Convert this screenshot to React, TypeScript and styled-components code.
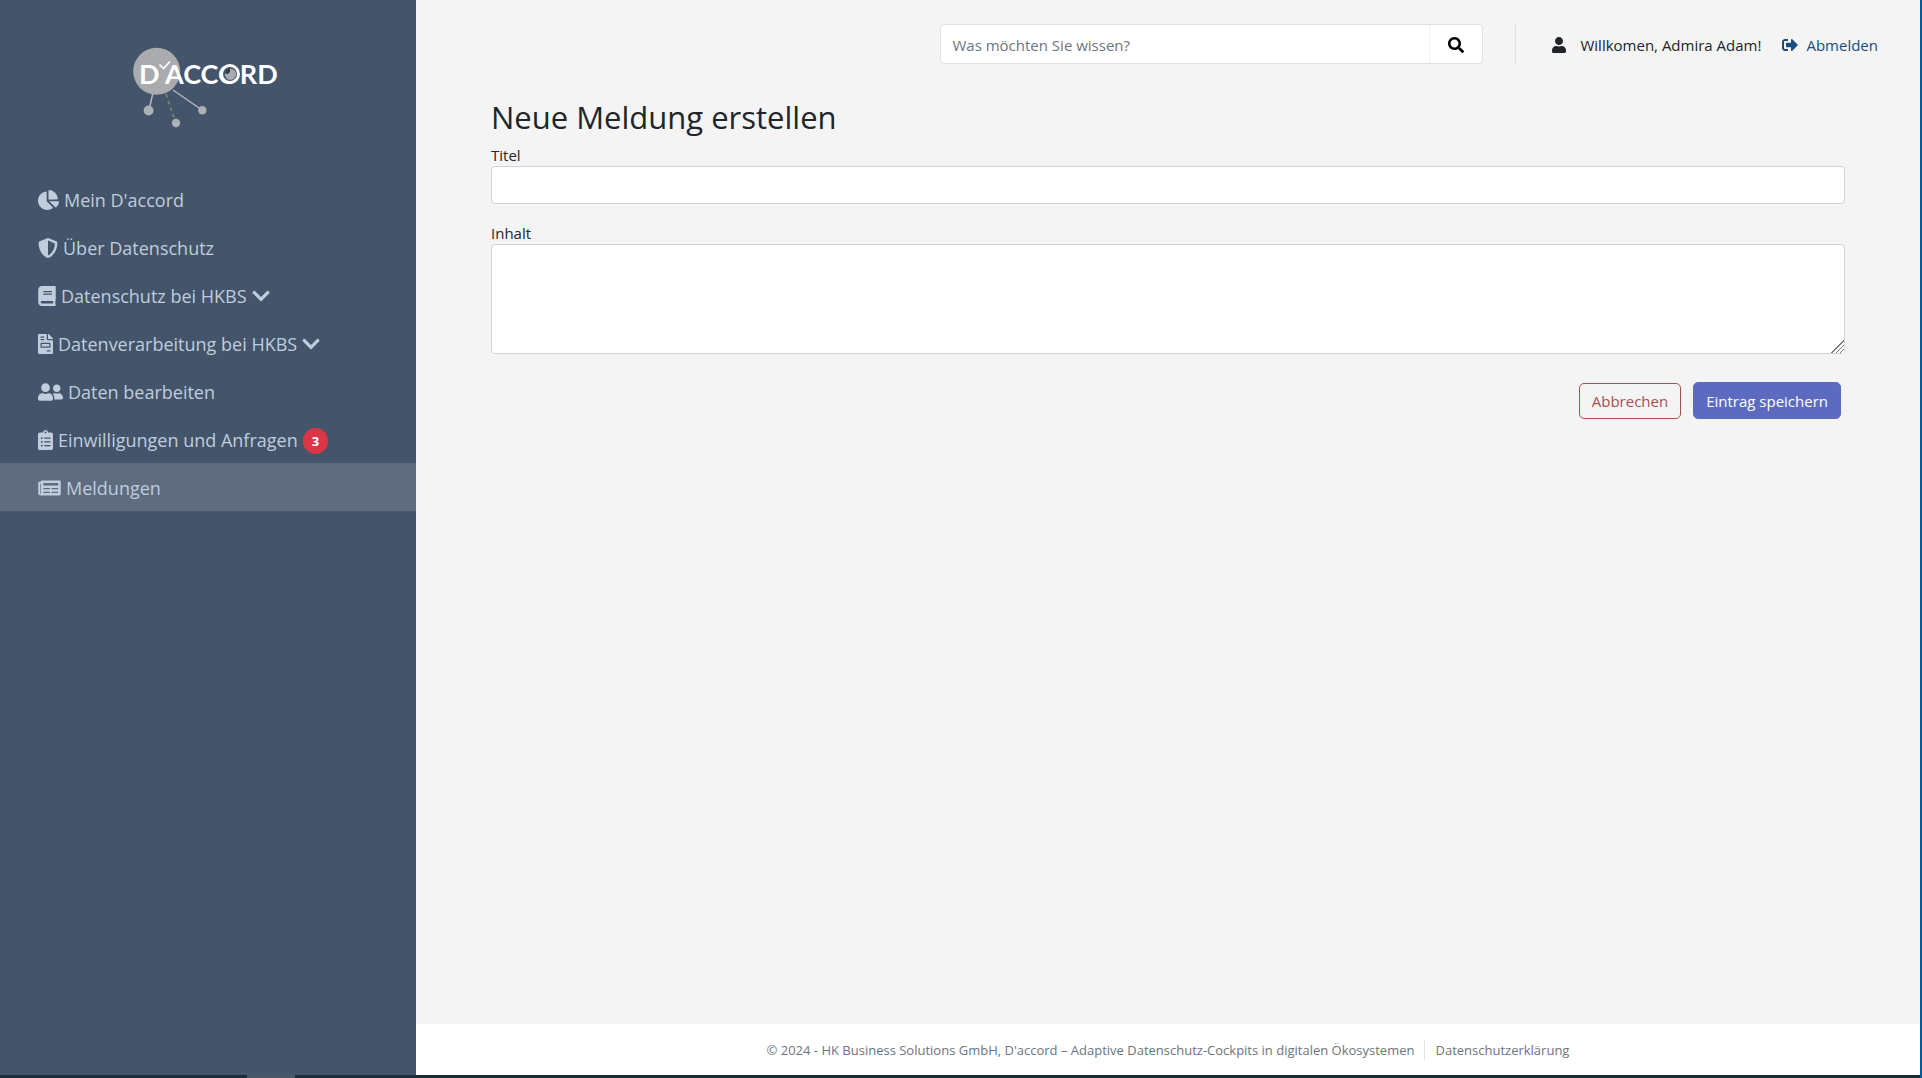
import React from 'react';
import styled, { createGlobalStyle } from 'styled-components';
import {
  FaBook, FaChartPie, FaChevronDown, FaClipboardList, FaFileInvoice, FaNewspaper,
  FaSearch, FaShieldAlt, FaSignOutAlt, FaUser, FaUserFriends,
} from 'react-icons/fa';

const GlobalStyle = createGlobalStyle`
  *, *::before, *::after { box-sizing: border-box; }
  body {
    margin: 0;
    background: #f4f4f4;
    color: #212529;
    font: 15px/24px "Open Sans", "Noto Sans", sans-serif;
  }
  a { color: inherit; text-decoration: none; }
  button, input, textarea { font: inherit; margin: 0; }
`;

const Screen = styled.div`
  display: flex;
  flex-direction: column;
  min-height: 100vh;
  border-right: 2px solid #005a9e;
`;

const Shell = styled.div`
  flex: 1;
  display: flex;
`;

const Sidebar = styled.aside`
  flex: none;
  width: 416px;
  background: #44546a;
  color: #bfcddd;
`;

const Brand = styled.a`
  display: block;
  height: 175px;
  padding: 40px 0 0 125px;
`;

const NavItem = styled.a<{ $active?: boolean }>`
  display: flex;
  align-items: center;
  gap: 5px;
  height: 48px;
  padding: 2px 0 0 38px;
  font-size: 18px;
  white-space: nowrap;
  background: ${(p) => (p.$active ? '#5f6b7e' : 'transparent')};
`;

const NavIcon = styled.span<{ $width: number }>`
  display: flex;
  svg {
    width: ${(p) => p.$width}px;
    height: 20px;
  }
`;

const Badge = styled.span`
  margin-top: 2px;
  padding: 0 9px;
  border-radius: 13px;
  background: #dc3545;
  color: #fff;
  font-size: 13px;
  font-weight: 700;
  line-height: 26px;
`;

const Main = styled.div`
  flex: 1;
  min-width: 0;
  display: flex;
  flex-direction: column;
`;

const TopBar = styled.header`
  display: flex;
  justify-content: flex-end;
  align-items: center;
  padding: 24px 42px 0 75px;
  height: 64px;
`;

const SearchForm = styled.form`
  display: flex;
  width: 543px;
  height: 40px;
  border: 1px solid #dee2e6;
  border-radius: 4px;
  background: #fff;
  overflow: hidden;
`;

const SearchInput = styled.input`
  flex: 1;
  min-width: 0;
  padding: 2px 11px 0;
  border: 0;
  outline: 0;
  background: transparent;
  &::placeholder { color: #6c757d; opacity: 1; }
`;

const SearchButton = styled.button`
  display: grid;
  place-items: center;
  width: 53px;
  padding: 2px 0 0;
  border: 0;
  border-left: 1px solid #f0f1f3;
  background: transparent;
  color: #000;
  font-size: 16px;
`;

const Account = styled.div`
  display: flex;
  align-items: center;
  height: 40px;
  margin-left: 32px;
  padding: 2px 0 0 35px;
  border-left: 1px solid #dee2e6;
  gap: 21px;
`;

const AccountEntry = styled.span<{ $gap: number; $color?: string }>`
  display: flex;
  align-items: center;
  gap: ${(p) => p.$gap}px;
  color: ${(p) => p.$color ?? 'inherit'};
  white-space: nowrap;
  svg { height: 16px; width: 16px; }
`;

const Content = styled.main`
  flex: 1;
  padding: 34px 75px 0;
`;

const Title = styled.h1`
  margin: 0 0 8px;
  font-size: 31px;
  font-weight: 400;
  line-height: 38px;
`;

const Field = styled.div`
  display: flex;
  flex-direction: column;
  margin-bottom: 18px;
`;

const FieldLabel = styled.label`
  line-height: 22px;
`;

const fieldBox = `
  width: 100%;
  padding: 6px 12px;
  border: 1px solid #ced4da;
  border-radius: 4px;
  background: #fff;
  color: #495057;
  outline: 0;
`;

const TextInput = styled.input`
  ${fieldBox}
  height: 38px;
`;

const TextArea = styled.textarea`
  ${fieldBox}
  display: block;
  height: 110px;
  resize: vertical;
  &::-webkit-resizer {
    background:
      linear-gradient(135deg, #fff 50%, transparent 50%),
      repeating-linear-gradient(135deg, #777 0 1px, #fff 1px 3px);
  }
`;

const Actions = styled.div`
  display: flex;
  justify-content: flex-end;
  align-items: flex-end;
  gap: 12px;
  padding: 10px 4px 0 0;
`;

const Button = styled.button<{ $primary?: boolean }>`
  height: ${(p) => (p.$primary ? 37 : 36)}px;
  padding: 0 12px;
  border: 1px solid ${(p) => (p.$primary ? '#5c6bc0' : '#a94f53')};
  border-radius: 5px;
  background: ${(p) => (p.$primary ? '#5c6bc0' : 'transparent')};
  color: ${(p) => (p.$primary ? '#fff' : '#a94f53')};
`;

const Footer = styled.footer`
  display: flex;
  justify-content: center;
  align-items: center;
  height: 51px;
  background: #fff;
  color: #6c757d;
  font-size: 13px;
  line-height: 20px;
`;

const FooterLink = styled.a`
  margin-left: 10px;
  padding-left: 10px;
  border-left: 1px solid #dee2e6;
`;

const TaskStrip = styled.div`
  height: 3px;
  padding-left: 247px;
  background: #1d2d38;
`;

const TaskMark = styled.div`
  width: 48px;
  height: 3px;
  background: #4c5964;
`;

const Logo = () => (
  <svg width="166" height="96" viewBox="125 40 166 96" role="img" aria-label="D'ACCORD">
    <circle cx="156.7" cy="71.3" r="23.5" fill="#a9abae" />
    <g stroke="#b3b8c1" strokeWidth="1.5">
      <path d="M152.7 94 149 110M173 90l29 20" />
      <path d="m166 94 9 27" stroke="#74906f" strokeDasharray="4 3" />
    </g>
    <g fill="#adb0b5">
      <circle cx="148.6" cy="110.5" r="5" />
      <circle cx="176" cy="123" r="4.2" />
      <circle cx="202.3" cy="110.3" r="4.2" />
    </g>
    <g fill="#fff" fontFamily="Lato, sans-serif" fontWeight="700" fontSize="27">
      <text x="139" y="83.5">D</text>
      <text x="165" y="83.5">ACCORD</text>
    </g>
    <circle cx="230" cy="74" r="8.5" fill="#44546a" stroke="#fff" strokeWidth="3" />
    <circle cx="230.5" cy="74.3" r="5.6" fill="#a9abae" />
    <path d="M225 73.5a6 6 0 0 1 5-5v3.5l-2 2Z" fill="#2f3c4d" />
    <path d="m159.5 64.5 4 4 6.5-7" fill="none" stroke="#fff" strokeWidth="1.7" />
  </svg>
);

const navigation = [
  { label: "Mein D'accord", Icon: FaChartPie, width: 21 },
  { label: 'Über Datenschutz', Icon: FaShieldAlt, width: 20 },
  { label: 'Datenschutz bei HKBS', Icon: FaBook, width: 18, expandable: true },
  { label: 'Datenverarbeitung bei HKBS', Icon: FaFileInvoice, width: 15, expandable: true },
  { label: 'Daten bearbeiten', Icon: FaUserFriends, width: 25 },
  { label: 'Einwilligungen und Anfragen', Icon: FaClipboardList, width: 15, count: 3 },
  { label: 'Meldungen', Icon: FaNewspaper, width: 23, active: true },
];

export default function App() {
  return (
    <Screen>
      <GlobalStyle />
      <Shell>
        <Sidebar>
          <Brand href="#"><Logo /></Brand>
          <nav>
            {navigation.map(({ label, Icon, width, expandable, count, active }) => (
              <NavItem href="#" key={label} $active={active}>
                <NavIcon $width={width}><Icon /></NavIcon>
                <span>{label}</span>
                {expandable && <NavIcon $width={18}><FaChevronDown /></NavIcon>}
                {count && <Badge>{count}</Badge>}
              </NavItem>
            ))}
          </nav>
        </Sidebar>
        <Main>
          <TopBar>
            <SearchForm role="search">
              <SearchInput type="search" placeholder="Was möchten Sie wissen?" aria-label="Suche" />
              <SearchButton type="button" aria-label="Suchen"><FaSearch /></SearchButton>
            </SearchForm>
            <Account>
              <AccountEntry $gap={13}><FaUser />Willkomen, Admira Adam!</AccountEntry>
              <AccountEntry as="a" href="#" $gap={8} $color="#1b4b80"><FaSignOutAlt />Abmelden</AccountEntry>
            </Account>
          </TopBar>
          <Content>
            <Title>Neue Meldung erstellen</Title>
            <form>
              <Field>
                <FieldLabel htmlFor="titel">Titel</FieldLabel>
                <TextInput id="titel" type="text" />
              </Field>
              <Field>
                <FieldLabel htmlFor="inhalt">Inhalt</FieldLabel>
                <TextArea id="inhalt" />
              </Field>
              <Actions>
                <Button type="button">Abbrechen</Button>
                <Button type="button" $primary>Eintrag speichern</Button>
              </Actions>
            </form>
          </Content>
          <Footer>
            <span>© 2024 - HK Business Solutions GmbH, D'accord – Adaptive Datenschutz-Cockpits in digitalen Ökosystemen</span>
            <FooterLink href="#">Datenschutzerklärung</FooterLink>
          </Footer>
        </Main>
      </Shell>
      <TaskStrip><TaskMark /></TaskStrip>
    </Screen>
  );
}
